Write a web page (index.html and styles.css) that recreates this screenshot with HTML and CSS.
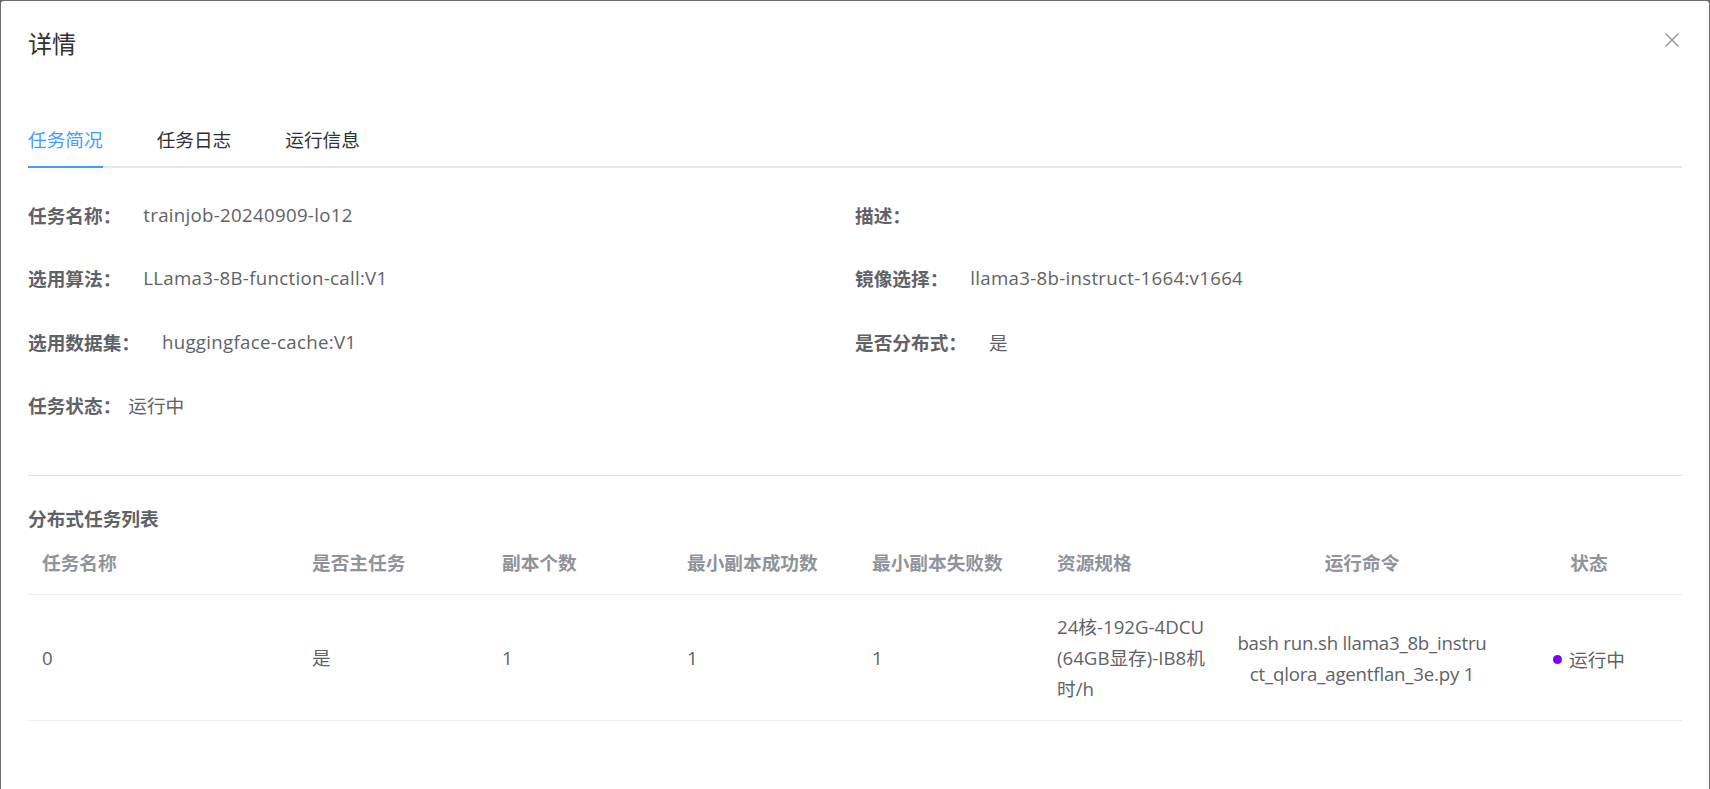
FILE: index.html
```html
<!DOCTYPE html>
<html lang="zh-CN">
<head>
<meta charset="utf-8">
<title>详情</title>
<link rel="stylesheet" href="styles.css">
</head>
<body>
<div class="dialog">
  <div class="dialog-header">
    <span class="dialog-title">详情</span>
  </div>
  <button class="close" aria-label="关闭">
    <svg width="14" height="14" viewBox="0 0 14 14"><path d="M0.7 0.7 L13.3 13.3 M13.3 0.7 L0.7 13.3" stroke="#909399" stroke-width="1.3" fill="none"/></svg>
  </button>
  <div class="dialog-body">
    <div class="tabs">
      <div class="tab active">任务简况</div>
      <div class="tab">任务日志</div>
      <div class="tab">运行信息</div>
    </div>
    <div class="info">
      <div class="item"><span class="label">任务名称：</span><span class="value">trainjob-20240909-lo12</span></div>
      <div class="item"><span class="label">描述：</span><span class="value"></span></div>
      <div class="item"><span class="label">选用算法：</span><span class="value">LLama3-8B-function-call:V1</span></div>
      <div class="item"><span class="label">镜像选择：</span><span class="value">llama3-8b-instruct-1664:v1664</span></div>
      <div class="item"><span class="label">选用数据集：</span><span class="value">huggingface-cache:V1</span></div>
      <div class="item"><span class="label">是否分布式：</span><span class="value">是</span></div>
      <div class="item"><span class="label">任务状态：</span><span class="value tight">运行中</span></div>
    </div>
    <div class="divider"></div>
    <div class="section-title">分布式任务列表</div>
    <table class="task-table">
      <colgroup>
        <col class="c1"><col class="c2"><col class="c3"><col class="c4"><col class="c5"><col class="c6"><col class="c7"><col class="c8">
      </colgroup>
      <thead>
        <tr>
          <th>任务名称</th>
          <th>是否主任务</th>
          <th>副本个数</th>
          <th>最小副本成功数</th>
          <th>最小副本失败数</th>
          <th>资源规格</th>
          <th class="center">运行命令</th>
          <th class="center">状态</th>
        </tr>
      </thead>
      <tbody>
        <tr>
          <td>0</td>
          <td>是</td>
          <td>1</td>
          <td>1</td>
          <td>1</td>
          <td>24核-192G-4DCU (64GB显存)-IB8机时/h</td>
          <td class="center cmd"><span class="cmd-line">bash run.sh llama3_8b_instru</span><span class="cmd-line">ct_qlora_agentflan_3e.py 1</span></td>
          <td class="center"><span class="status"><span class="dot"></span>运行中</span></td>
        </tr>
      </tbody>
    </table>
  </div>
</div>
</body>
</html>
```

FILE: styles.css
```css
* {
  box-sizing: border-box;
}

html,
body {
  margin: 0;
  height: 100%;
}

body {
  background: #6b6b6b;
  overflow: hidden;
  font-family: "Open Sans", "Noto Sans CJK SC", sans-serif;
}

.dialog {
  position: relative;
  margin: 1px 0 0 1px;
  width: 1708px;
  height: 820px;
  background: #fff;
  border-radius: 3px;
}

.dialog-header {
  padding: 27px 27px 13px;
}

.dialog-title {
  display: block;
  font-size: 24px;
  line-height: 32px;
  color: #303133;
}

.close {
  position: absolute;
  top: 32px;
  right: 30px;
  width: 14px;
  height: 14px;
  padding: 0;
  border: 0;
  background: none;
  display: flex;
}

.dialog-body {
  padding: 40px 27px 30px;
}

.tabs {
  display: flex;
  gap: 54px;
  border-bottom: 2px solid #e4e7ed;
}

.tab {
  height: 53px;
  line-height: 53px;
  font-size: 18.67px;
  color: #303133;
}

.tab.active {
  color: #409eff;
  height: 55px;
  border-bottom: 2px solid #409eff;
  margin-bottom: -2px;
}

.info {
  display: grid;
  grid-template-columns: 1fr 1fr;
  row-gap: 23.5px;
  margin-top: 26px;
}

.item {
  display: flex;
  align-items: center;
  height: 40px;
  font-size: 18.67px;
  color: #606266;
}

.label {
  font-weight: 700;
}

.value {
  margin-left: 22px;
  letter-spacing: 0.3px;
}

.value.tight {
  margin-left: 7px;
  letter-spacing: 0;
}

.divider {
  height: 1px;
  background: #dcdfe6;
  margin-top: 50.5px;
}

.section-title {
  margin-top: 31px;
  font-size: 18.67px;
  line-height: 24px;
  font-weight: 700;
  color: #606266;
}

.task-table {
  width: 100%;
  border-collapse: collapse;
  table-layout: fixed;
  font-size: 18.67px;
  color: #606266;
}

.c1 { width: 270px; }
.c2 { width: 190px; }
.c3 { width: 185px; }
.c4 { width: 185px; }
.c5 { width: 185px; }
.c6 { width: 185px; }
.c7 { width: 268px; }
.c8 { width: 186px; }

.task-table th {
  padding: 16px 14px;
  line-height: 31px;
  text-align: left;
  color: #909399;
  font-weight: 700;
  border-bottom: 1px solid #ebeef5;
}

.task-table td {
  padding: 16px 14px;
  line-height: 31px;
  text-align: left;
  vertical-align: middle;
  border-bottom: 1px solid #ebeef5;
}

.task-table .center {
  text-align: center;
}

.task-table td.cmd {
  padding-left: 2px;
  padding-right: 2px;
  letter-spacing: -0.2px;
}

.cmd-line {
  display: block;
  white-space: nowrap;
}

.status {
  display: inline-flex;
  align-items: center;
  gap: 7px;
}

.dot {
  width: 9px;
  height: 9px;
  border-radius: 50%;
  background: #7f00ff;
}
```
